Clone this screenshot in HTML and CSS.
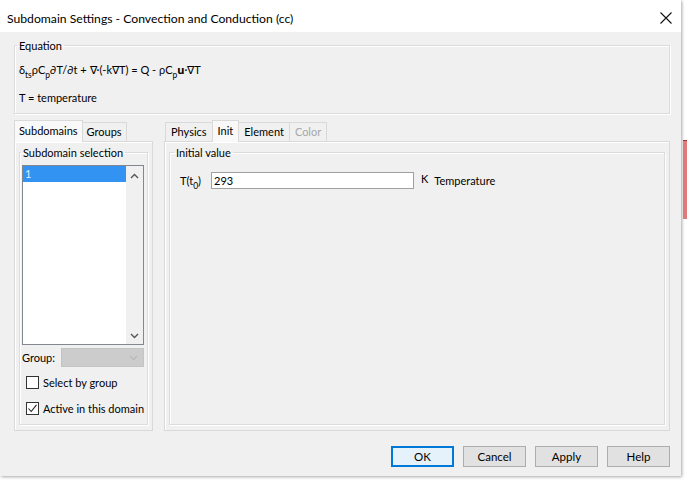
FILE: index.html
```html
<!DOCTYPE html>
<html lang="en">
<head>
    <meta charset="UTF-8">
    <meta name="viewport" content="width=device-width, initial-scale=1.0">
    <title>Subdomain Settings</title>
    <link rel="stylesheet" href="styles.css">
</head>
<body>
    <div class="desk">
        <div class="dialog">
            <!-- Title bar -->
            <div class="titlebar">
                <span class="title">Subdomain Settings - Convection and Conduction (cc)</span>
                <span class="close">
                    <svg width="12" height="12" viewBox="0 0 12 12"><path d="M0.5 0.5 L11.5 11.5 M11.5 0.5 L0.5 11.5" stroke="#111" stroke-width="1.1" fill="none"/></svg>
                </span>
            </div>

            <div class="content">
                <fieldset class="group equation">
                    <legend>Equation</legend>
                    <p class="eq">&delta;<sub>ts</sub>&rho;C<sub>p</sub>&part;T/&part;t + &nabla;&middot;(-k&nabla;T) = Q - &rho;C<sub>p</sub><b>u</b>&middot;&nabla;T</p>
                    <p class="eq second">T = temperature</p>
                </fieldset>

                <div class="panes">
                    <!-- Left tabs -->
                    <div class="tabset left">
                        <div class="tabs">
                            <span class="tab active">Subdomains</span>
                            <span class="tab">Groups</span>
                        </div>
                        <div class="panel">
                            <fieldset class="group selection">
                                <legend>Subdomain selection</legend>
                                <div class="listbox">
                                    <div class="items">
                                        <div class="item selected">1</div>
                                    </div>
                                    <div class="scrollbar">
                                        <svg width="9" height="6" viewBox="0 0 9 6"><path d="M1 5 L4.5 1.5 L8 5" stroke="#555" stroke-width="1.4" fill="none"/></svg>
                                        <svg width="9" height="6" viewBox="0 0 9 6"><path d="M1 1 L4.5 4.5 L8 1" stroke="#555" stroke-width="1.4" fill="none"/></svg>
                                    </div>
                                </div>
                                <div class="grouprow">
                                    <span>Group:</span>
                                    <div class="combo">
                                        <svg width="9" height="6" viewBox="0 0 9 6"><path d="M1 1 L4.5 4.5 L8 1" stroke="#b8b8b8" stroke-width="1.2" fill="none"/></svg>
                                    </div>
                                </div>
                                <label class="check"><span class="box"></span>Select by group</label>
                                <label class="check"><span class="box">
                                    <svg width="11" height="11" viewBox="0 0 11 11"><path d="M1.5 5.5 L4.2 8.5 L9.5 1.8" stroke="#222" stroke-width="1.1" fill="none"/></svg>
                                </span>Active in this domain</label>
                            </fieldset>
                        </div>
                    </div>

                    <!-- Right tabs -->
                    <div class="tabset right">
                        <div class="tabs">
                            <span class="tab">Physics</span>
                            <span class="tab active">Init</span>
                            <span class="tab">Element</span>
                            <span class="tab disabled">Color</span>
                        </div>
                        <div class="panel">
                            <fieldset class="group initial">
                                <legend>Initial value</legend>
                                <div class="field">
                                    <span class="name">T(t<sub>0</sub>)</span>
                                    <input type="text" value="293">
                                    <span class="unit">K</span>
                                    <span class="desc">Temperature</span>
                                </div>
                            </fieldset>
                        </div>
                    </div>
                </div>

                <div class="buttons">
                    <button class="default">OK</button>
                    <button>Cancel</button>
                    <button>Apply</button>
                    <button>Help</button>
                </div>
            </div>
        </div>

        <div class="behind">
            <div class="red"></div>
        </div>
    </div>
</body>
</html>
```

FILE: styles.css
```css
/* GLOBAL */
body {
    margin: 0;
    background: #fff;
    font-family: Lato, "Noto Sans", sans-serif;
    font-size: 11px;
    color: #000;
}

.desk {
    display: flex;
    width: 687px;
    height: 480px;
    overflow: hidden;
}

.dialog {
    width: 681px;
    height: 476px;
    flex: none;
    background: #f0f0f0;
    box-shadow: 1px 1px 3px rgba(0, 0, 0, 0.35);
    display: flex;
    flex-direction: column;
}

.behind {
    flex: 1;
    padding-top: 140px;
    padding-left: 2px;
}

.red {
    height: 78px;
    background: #df7a7a;
    border-top: 1px solid #a33;
}

/* TITLE BAR */
.titlebar {
    height: 32px;
    box-sizing: border-box;
    padding: 4px 9px 0 7px;
    background: #fff;
    display: flex;
    align-items: center;
    justify-content: space-between;
}

.title {
    font-size: 12.2px;
}

.close {
    display: flex;
}

/* CONTENT */
.content {
    flex: 1;
    padding: 6px 11px 0 14px;
    display: flex;
    flex-direction: column;
}

p {
    margin: 0;
}

sub {
    font-size: 8.5px;
    vertical-align: -4px;
    line-height: 0;
}

b {
    font-family: "Noto Sans", sans-serif;
    font-weight: 700;
}

.group {
    margin: 0;
    border: 1px solid #dcdcdc;
    box-shadow: inset 1px 1px 0 #fff, 1px 1px 0 #fff;
    padding: 0;
    min-width: 0;
}

.group legend {
    padding: 0 2px;
    line-height: 15px;
}

.equation {
    padding: 9px 4px 7px 4px;
}

.equation legend {
    margin-left: -2px;
}

.eq {
    line-height: 16px;
}

.eq.second {
    margin-top: 12px;
}

/* TABS */
.panes {
    display: flex;
    gap: 11px;
    margin-top: 6px;
}

.tabset.left {
    width: 139px;
}

.tabset.right {
    flex: 1;
}

.tabs {
    display: flex;
    align-items: flex-end;
    height: 21px;
}

.tabset.right .tabs {
    padding-left: 1px;
}

.tab {
    height: 18px;
    line-height: 17px;
    padding: 0 4px;
    border: 1px solid #d9d9d9;
    border-bottom: none;
    margin-right: -1px;
    background: #f0f0f0;
    white-space: nowrap;
}

.tabset.right .tab {
    padding: 0 5px;
}

.tab.active {
    height: 21px;
    line-height: 19px;
    background: #f9f9f9;
    position: relative;
    z-index: 1;
    margin-bottom: -1px;
}

.tab.disabled {
    color: #a7a7a7;
}

.panel {
    height: 290px;
    box-sizing: border-box;
    border: 1px solid #d9d9d9;
    box-shadow: inset 1px 1px 0 #fff;
    padding: 3px 4px 5px 4px;
    display: flex;
}

.panel .group {
    flex: 1;
}

/* LEFT PANEL */
.selection {
    padding: 5px 2px 0 2px;
    display: flex;
    flex-direction: column;
}

.selection legend {
    margin-left: -1px;
}

.listbox {
    height: 180px;
    box-sizing: border-box;
    border: 1px solid #828790;
    background: #fff;
    display: flex;
    margin-right: 1px;
}

.items {
    flex: 1;
}

.item {
    height: 16px;
    line-height: 15px;
    padding-left: 2px;
}

.item.selected {
    background: #3393f2;
    color: #dfefff;
}

.scrollbar {
    width: 17px;
    background: #f0f0f0;
    display: flex;
    flex-direction: column;
    justify-content: space-between;
    align-items: center;
    padding: 7px 0 5px;
}

.grouprow {
    display: flex;
    align-items: center;
    margin-top: 3px;
    gap: 6px;
}

.combo {
    width: 84px;
    height: 19px;
    box-sizing: border-box;
    background: #cccccc;
    border: 1px solid #c4c4c4;
    display: flex;
    justify-content: flex-end;
    align-items: center;
    padding-right: 5px;
    margin-left: auto;
    margin-right: 1px;
}

.check {
    display: flex;
    align-items: center;
    gap: 4px;
    margin-left: 4px;
    height: 14px;
    margin-top: 8px;
    white-space: nowrap;
}

.check + .check {
    margin-top: 12px;
}

.box {
    width: 13px;
    height: 13px;
    box-sizing: border-box;
    border: 1px solid #333;
    background: #fff;
    display: flex;
    align-items: center;
    justify-content: center;
}

/* RIGHT PANEL */
.initial {
    padding: 5px 6px 0 10px;
}

.initial legend {
    margin-left: -6px;
}

.field {
    display: flex;
    align-items: center;
    margin-top: 7px;
}

.field .name {
    width: 31px;
}

.field input {
    width: 203px;
    height: 17px;
    box-sizing: border-box;
    border: 1px solid #a0a0a0;
    font: inherit;
    padding: 0 2px;
    margin: 0;
    background: #fff;
}

.unit {
    margin-left: 7px;
    position: relative;
    top: -2px;
}

.desc {
    margin-left: 6px;
}

/* BUTTONS */
.buttons {
    display: flex;
    justify-content: flex-end;
    gap: 9px;
    margin-top: 15px;
}

button {
    width: 63px;
    height: 21px;
    font: inherit;
    font-size: 11.5px;
    background: #e1e1e1;
    border: 1px solid #adadad;
    padding: 0;
    color: #000;
}

button.default {
    background: #e5f1fb;
    border: 1px solid #0078d7;
    box-shadow: inset 0 0 0 1px #0078d7;
}
```
